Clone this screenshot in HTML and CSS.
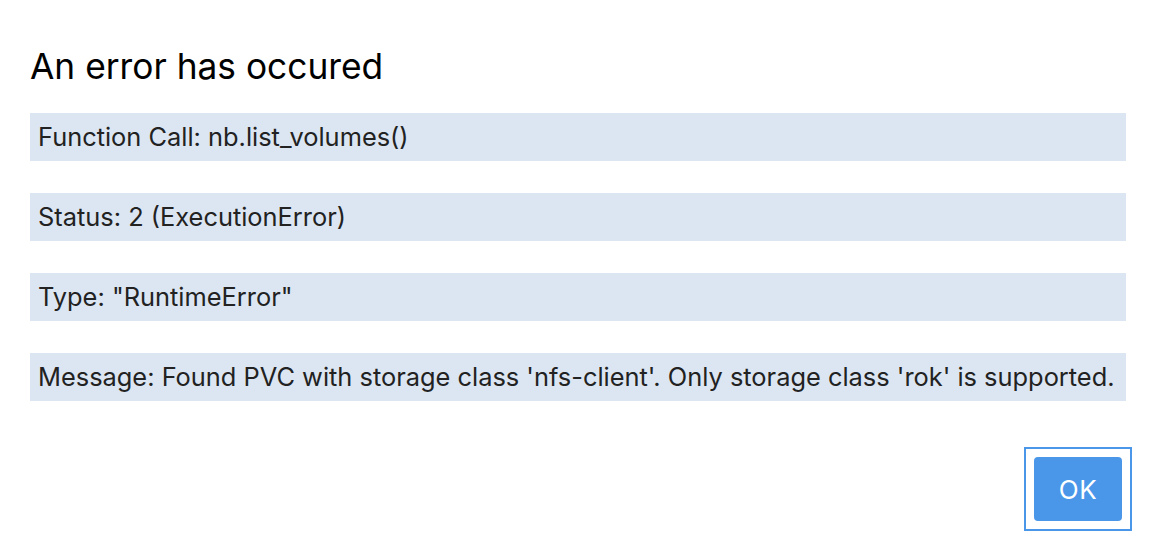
FILE: index.html
```html
<!DOCTYPE html>
<html>
<head>
<meta charset="utf-8">
<link rel="stylesheet" href="styles.css">
</head>
<body>
<div class="dialog">
  <h1 class="title">An error has occured</h1>
  <div class="rows">
    <div class="row">Function Call: nb.list_volumes()</div>
    <div class="row">Status: 2 (ExecutionError)</div>
    <div class="row">Type: "RuntimeError"</div>
    <div class="row">Message: Found PVC with storage class 'nfs-client'. Only storage class 'rok' is supported.</div>
  </div>
  <div class="actions">
    <div class="focus-ring"><button class="ok">OK</button></div>
  </div>
</div>
</body>
</html>
```
FILE: styles.css
```css
html, body {
  margin: 0;
  padding: 0;
  background: #ffffff;
}
body {
  font-family: Inter, "Noto Sans", "Liberation Sans", sans-serif;
  color: #1f1f1f;
}
.dialog {
  padding: 44px 30px 0 30px;
}
.title {
  margin: 0;
  font-size: 35.3px;
  font-weight: 400;
  line-height: 46px;
  color: #000;
}
.rows {
  margin-top: 23px;
  display: flex;
  flex-direction: column;
  gap: 32px;
}
.row {
  background: #dce6f2;
  height: 48px;
  line-height: 48px;
  padding-left: 8px;
  font-size: 25.4px;
  color: #222;
  white-space: nowrap;
}
.actions {
  display: flex;
  justify-content: flex-end;
  margin-top: 46px;
  margin-right: -5px;
}
.focus-ring {
  border: 2px solid #4a97ea;
  padding: 8px;
  display: flex;
  margin-right: -1px;
}
.ok {
  width: 88px;
  height: 64px;
  border: none;
  border-radius: 4px;
  background: #4a97ea;
  color: #fff;
  font-family: inherit;
  font-size: 26px;
  letter-spacing: 0.5px;
}
```
